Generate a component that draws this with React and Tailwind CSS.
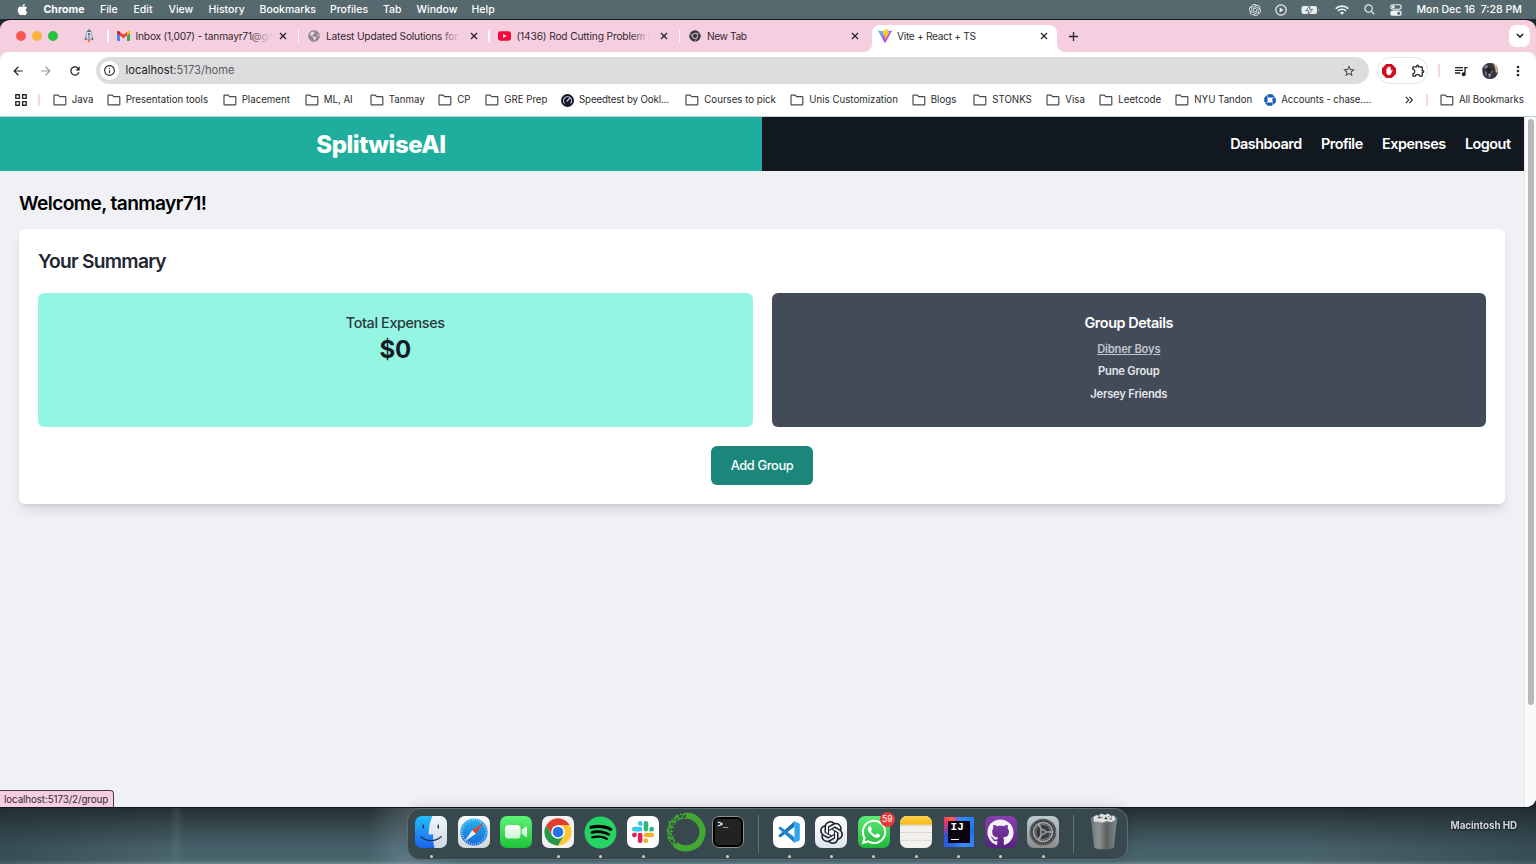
import React from "react";
import { FaApple, FaSpotify, FaWhatsapp, FaGithub, FaGlobeAmericas } from "react-icons/fa";
import { MdOutlineExtension, MdQueueMusic, MdStarBorder, MdMoreVert, MdRefresh, MdArrowBack, MdArrowForward, MdOutlineInfo } from "react-icons/md";
import { SiOpenai } from "react-icons/si";

/* ---------- small drawings ---------- */

const CloseIcon = () => (
  <svg viewBox="0 0 10 10" className="size-[8px] shrink-0" fill="none" stroke="#2b2329" strokeWidth="1.6">
    <path d="M1.2 1.2l7.6 7.6M8.8 1.2L1.2 8.8" />
  </svg>
);

const FolderIcon = () => (
  <svg viewBox="0 0 14 12" className="h-[12px] w-[14px] shrink-0" fill="none" stroke="#4a4a4d" strokeWidth="1.2" strokeLinejoin="round">
    <path d="M1 10.2V1.8a.6.6 0 0 1 .6-.6h3.6l1.4 1.5h5.6a.6.6 0 0 1 .6.6v6.9a.6.6 0 0 1-.6.6H1.6a.6.6 0 0 1-.6-.6z" />
  </svg>
);

const Rocket = () => (
  <svg viewBox="0 0 12 14" className="h-[14px] w-[12px]">
    <path d="M3.400 7L1.600 9.400v2.200l2.200-1.200zM8.600 7l1.800 2.400v2.200l-2.200-1.200z" fill="#4f7fb5" />
    <path d="M6 .4C3.600 2 3 4.600 3 6.600c0 1.700.4 3 1 4h4c.6-1 1-2.300 1-4C9 4.600 8.400 2 6 .4z" fill="#dfe5ea" stroke="#667786" strokeWidth=".6" />
    <path d="M6 .4C4.900 1.100 4.200 2 3.800 3h4.400C7.800 2 7.100 1.100 6 .4z" fill="#56708a" />
    <circle cx="6" cy="5.300" r="1.200" fill="#3b6a9a" />
    <path d="M6 6.900v3.600" stroke="#c2413a" strokeWidth="1" />
    <path d="M4.600 11h2.800L6 13.900z" fill="#e8742c" />
  </svg>
);

const Gmail = () => (
  <svg viewBox="0 0 24 18" className="h-[10px] w-[13px]">
    <path d="M0 3v13.400C0 17.300.7 18 1.600 18h3.900V8z" fill="#4285f4" />
    <path d="M18.500 18h3.900c.9 0 1.600-.7 1.600-1.600V3l-5.500 5z" fill="#34a853" />
    <path d="M18.500 1.400V8L24 4V2.400c0-2.300-2.600-3-4.100-2z" fill="#fbbc04" />
    <path d="M5.500 8V1.400L12 6.300l6.500-4.900V8L12 13z" fill="#ea4335" />
    <path d="M0 2.400V4l5.500 4V1.400L4.100.4C2.600-.6 0 .1 0 2.400z" fill="#c5221f" />
  </svg>
);

const Globe = () => <FaGlobeAmericas className="size-[12px] text-[#8b878b]" />;

const YouTube = () => (
  <svg viewBox="0 0 14 10" className="h-[10px] w-[13px]">
    <rect width="14" height="10" rx="2.600" fill="#f5083a" />
    <path d="M5.600 2.900v4.200L9.200 5z" fill="#fff" />
  </svg>
);

const ChromeGray = () => (
  <svg viewBox="0 0 24 24" className="size-[12px]">
    <circle cx="12" cy="12" r="11.500" fill="#3d3940" />
    <g stroke="#d9c6d1" strokeWidth="1.400" fill="none">
      <path d="M12 6.600h10.300M7.300 14.700L2.200 5.800M16.700 14.700l-5.100 8.800" />
      <circle cx="12" cy="12" r="5.300" fill="#3d3940" strokeWidth="1.800" />
    </g>
  </svg>
);

const Vite = () => (
  <svg viewBox="0 0 256 257" className="size-[14px] shrink-0">
    <defs>
      <linearGradient id="vite-a" x1="0" y1="0" x2=".6" y2=".8">
        <stop offset="0" stopColor="#41d1ff" />
        <stop offset="1" stopColor="#bd34fe" />
      </linearGradient>
      <linearGradient id="vite-b" x1=".4" y1="0" x2=".5" y2="1">
        <stop offset="0" stopColor="#ffea83" />
        <stop offset=".1" stopColor="#ffdd35" />
        <stop offset="1" stopColor="#ffa800" />
      </linearGradient>
    </defs>
    <path fill="url(#vite-a)" d="M255.153 37.938L134.897 252.976c-2.483 4.440-8.862 4.466-11.382.048L.875 37.958c-2.746-4.814 1.371-10.646 6.827-9.670l120.385 21.517a6.537 6.537 0 0 0 2.322-.004l117.867-21.483c5.438-.991 9.574 4.796 6.877 9.620Z" />
    <path fill="url(#vite-b)" d="M185.432.063L96.440 17.501a3.268 3.268 0 0 0-2.634 3.014l-5.474 92.456a3.268 3.268 0 0 0 3.997 3.378l24.777-5.718c2.318-.535 4.413 1.507 3.936 3.838l-7.361 36.047c-.495 2.426 1.782 4.500 4.151 3.780l15.304-4.649c2.372-.720 4.652 1.360 4.150 3.788l-11.698 56.621c-.732 3.542 3.979 5.473 5.943 2.437l1.313-2.028l72.516-144.720c1.215-2.423-.880-5.186-3.540-4.672l-25.505 4.922c-2.396.462-4.435-1.770-3.759-4.114l16.646-57.705c.677-2.350-1.370-4.583-3.769-4.113Z" />
  </svg>
);

const Speedtest = () => (
  <svg viewBox="0 0 14 14" className="size-[13px] shrink-0">
    <circle cx="7" cy="7" r="7" fill="#16182b" />
    <path d="M3.900 10.200a4.300 4.300 0 1 1 6.200 0" fill="none" stroke="#dfe2ea" strokeWidth="1.100" />
    <path d="M6.200 7.900l3-3.200" stroke="#dfe2ea" strokeWidth="1.300" />
  </svg>
);

const Chase = () => (
  <svg viewBox="0 0 24 24" className="size-[12px] shrink-0" fill="#155bb5">
    <path d="M8 .5h8.500L23 7H8z" />
    <path d="M23.500 8v8.500L17 23V8z" />
    <path d="M16 23.500H7.500L1 17h15z" />
    <path d="M.5 16V7.500L7 1v15z" />
  </svg>
);

const Battery = () => (
  <svg viewBox="0 0 19 10" className="h-[10px] w-[19px]">
    <rect x=".5" y="1" width="15.500" height="8" rx="2" fill="#e9edee" />
    <path d="M17.200 3.500v3c1.300-.4 1.300-2.600 0-3z" fill="#aebabc" />
    <path d="M9.300 0L4.800 5.600h3L7 10l4.600-5.700H8.500z" fill="#f4f6f6" stroke="#55696f" strokeWidth=".9" />
  </svg>
);

const Wifi = () => (
  <svg viewBox="0 0 14 10" className="h-[10px] w-[14px]" fill="none" stroke="#eef2f2" strokeWidth="1.700">
    <path d="M.7 3.600a9 9 0 0 1 12.600 0M2.900 5.900a5.900 5.900 0 0 1 8.200 0" />
    <path d="M7 9.800L4.900 7.700a3 3 0 0 1 4.200 0z" fill="#eef2f2" stroke="none" />
  </svg>
);

const MenuSearch = () => (
  <svg viewBox="0 0 12 12" className="size-[11px]" fill="none" stroke="#eef2f2" strokeWidth="1.300">
    <circle cx="5" cy="5" r="4" />
    <path d="M8 8l3.400 3.400" />
  </svg>
);

const ControlCenter = () => (
  <svg viewBox="0 0 12 12" className="size-[12px]">
    <rect x=".8" y=".8" width="10.400" height="4.400" rx="2.200" fill="none" stroke="#eef2f2" strokeWidth="1.100" />
    <circle cx="3.300" cy="3" r="1.400" fill="#eef2f2" />
    <rect x=".3" y="6.500" width="11.400" height="5.300" rx="2.600" fill="#eef2f2" />
    <circle cx="8.800" cy="9.150" r="1.500" fill="#55696f" />
  </svg>
);

const PlayRing = () => (
  <svg viewBox="0 0 12 12" className="size-[12px]">
    <circle cx="6" cy="6" r="5.200" fill="none" stroke="#eef2f2" strokeWidth="1.200" />
    <path d="M4.600 3.600v4.800L8.600 6z" fill="#eef2f2" />
  </svg>
);

const AdBlock = () => (
  <svg viewBox="0 0 24 24" className="size-[14px]">
    <path d="M7.200 0h9.600L24 7.200v9.600L16.800 24H7.200L0 16.800V7.200z" fill="#d20a1e" />
    <path d="M7.500 13V8.200c0-1.200 1.700-1.200 1.700 0V6c0-1.200 1.900-1.200 1.900 0V4.800c0-1.200 2-1.200 2 0v1.400c0-1.200 1.900-1.200 1.900 0v6l1.300-1.700c.8-1.100 2.200-.2 1.700.9l-2.700 5.700c-.7 1.500-1.700 2.100-3.200 2.100-2.900 0-4.600-1.900-4.600-4.800z" fill="#fff" />
  </svg>
);

const Avatar = () => (
  <svg viewBox="0 0 16 16" className="size-[16px]">
    <defs>
      <clipPath id="av"><circle cx="8" cy="8" r="8" /></clipPath>
    </defs>
    <g clipPath="url(#av)">
      <rect width="16" height="16" fill="#8d8f93" />
      <path d="M0 4l5-4h8l3 5v11H2z" fill="#34353d" />
      <path d="M11 0l5 1v8l-2 1-1-5z" fill="#cdb795" />
      <path d="M4 6l4-2 3 3-1 4-4 1z" fill="#23222b" />
      <path d="M2 3l3-1 1 2-3 2zM6 11l3-1v3l-2 2z" fill="#7d8ba0" />
      <path d="M3 8l2 1v3l-2 1z" fill="#556a86" />
      <path d="M9 7l2 1-1 3-1-1z" fill="#8a5848" />
    </g>
  </svg>
);

/* ---------- dock icons ---------- */

const Finder = () => (
  <svg viewBox="0 0 32 32" className="size-[32px]">
    <defs>
      <linearGradient id="fd-a" x1="0" y1="0" x2="0" y2="1"><stop offset="0" stopColor="#25bdfd" /><stop offset="1" stopColor="#1a63ee" /></linearGradient>
      <linearGradient id="fd-b" x1="0" y1="0" x2="0" y2="1"><stop offset="0" stopColor="#f3f5f8" /><stop offset="1" stopColor="#cfd8e6" /></linearGradient>
      <clipPath id="fd-c"><rect width="32" height="32" rx="7" /></clipPath>
    </defs>
    <g clipPath="url(#fd-c)">
      <rect width="32" height="32" fill="url(#fd-a)" />
      <path d="M17.500 0C15 5.500 13.800 11 13.500 18.500h4.600c-.1 5 .3 9 1.400 13.500H32V0z" fill="url(#fd-b)" />
    </g>
    <path d="M8.300 9.200v2.800M23.300 9.200v2.800" stroke="#1b3150" strokeWidth="1.400" strokeLinecap="round" />
    <path d="M6 20.800c5.500 5.200 14.500 5.200 20 0" stroke="#1b3150" strokeWidth="1.300" fill="none" strokeLinecap="round" />
  </svg>
);

const Safari = () => (
  <svg viewBox="0 0 32 32" className="size-[32px]">
    <defs>
      <linearGradient id="sf-a" x1="0" y1="0" x2="0" y2="1"><stop offset="0" stopColor="#fcfcfc" /><stop offset="1" stopColor="#d5d6d8" /></linearGradient>
      <linearGradient id="sf-b" x1="0" y1="0" x2="0" y2="1"><stop offset="0" stopColor="#24b4f0" /><stop offset="1" stopColor="#1a67d8" /></linearGradient>
    </defs>
    <rect width="32" height="32" rx="7" fill="url(#sf-a)" />
    <circle cx="16" cy="16" r="13.600" fill="url(#sf-b)" />
    <circle cx="16" cy="16" r="12" fill="none" stroke="#cfeaff" strokeWidth="1.600" strokeDasharray=".6 1.490" />
    <path d="M25.500 6.500L17.800 17.800 14.200 14.200z" fill="#e8402f" />
    <path d="M6.500 25.500l7.700-11.300 3.600 3.600z" fill="#eef1f4" />
  </svg>
);

const FaceTime = () => (
  <svg viewBox="0 0 32 32" className="size-[32px]">
    <defs>
      <linearGradient id="ft-a" x1="0" y1="0" x2="0" y2="1"><stop offset="0" stopColor="#5df277" /><stop offset="1" stopColor="#1fc338" /></linearGradient>
      <linearGradient id="ft-b" x1="0" y1="0" x2="0" y2="1"><stop offset="0" stopColor="#fff" /><stop offset="1" stopColor="#c9f2cf" /></linearGradient>
    </defs>
    <rect width="32" height="32" rx="7" fill="url(#ft-a)" />
    <rect x="5" y="9" width="15.500" height="13.500" rx="3.600" fill="url(#ft-b)" />
    <path d="M21.700 14l3.800-3.300c.7-.6 1.500-.3 1.500.6v9c0 .9-.8 1.200-1.500.6L21.700 17.600z" fill="url(#ft-b)" />
  </svg>
);

const ChromeApp = () => (
  <svg viewBox="0 0 32 32" className="size-[32px]">
    <rect width="32" height="32" rx="7" fill="#f3f2f0" />
    <g transform="translate(1.120 1.120) scale(.62)">
      <path d="M4.950 13A22 22 0 0 1 43.050 13L24 13 14.470 29.500z" fill="#e33b2e" />
      <path d="M4.950 13A22 22 0 0 1 43.050 13L24 13 14.470 29.500z" fill="#fcc934" transform="rotate(120 24 24)" />
      <path d="M4.950 13A22 22 0 0 1 43.050 13L24 13 14.470 29.500z" fill="#279847" transform="rotate(240 24 24)" />
      <circle cx="24" cy="24" r="11" fill="#fff" />
      <circle cx="24" cy="24" r="8.600" fill="#2472e8" />
    </g>
  </svg>
);

const SpotifyApp = () => (
  <div className="relative flex size-[33px] items-center justify-center">
    <span className="absolute size-[26px] rounded-full bg-black" />
    <FaSpotify className="relative size-[33px] text-[#26d365]" />
  </div>
);

const SLACK = "M5.042 15.165a2.528 2.528 0 0 1-2.520 2.523A2.528 2.528 0 0 1 0 15.165a2.527 2.527 0 0 1 2.522-2.520h2.520v2.520zM6.313 15.165a2.527 2.527 0 0 1 2.521-2.520 2.527 2.527 0 0 1 2.521 2.520v6.313A2.528 2.528 0 0 1 8.834 24a2.528 2.528 0 0 1-2.521-2.522v-6.313z";
const SlackApp = () => (
  <svg viewBox="0 0 32 32" className="size-[32px]">
    <rect width="32" height="32" rx="7" fill="#fff" />
    <g transform="translate(5 5) scale(.92)">
      <path d={SLACK} fill="#e01e5a" />
      <path d={SLACK} fill="#36c5f0" transform="rotate(90 12 12)" />
      <path d={SLACK} fill="#2eb67d" transform="rotate(180 12 12)" />
      <path d={SLACK} fill="#ecb22e" transform="rotate(270 12 12)" />
    </g>
  </svg>
);

const Anaconda = () => (
  <svg viewBox="0 0 40 40" className="size-[40px] shrink-0" fill="none">
    <path d="M20 3.600A16.400 16.400 0 1 1 9.500 32.600" stroke="#43a832" strokeWidth="6.200" />
    <path d="M20 1.800A18.200 18.200 0 0 0 9.500 34.900" stroke="#43a832" strokeWidth="1.400" strokeDasharray="2.600 1" />
    <path d="M20 6.400A13.600 13.600 0 0 0 9.500 30" stroke="#43a832" strokeWidth="1.200" strokeDasharray="2.200 1.200" />
    <path d="M19 1l-4 6-5-3-1 6-6 0 2 5-4 3 4 4-3 4 6 1 0 6 5-2M12 3l1 5M6 8l4 3M3 13l5 3M2 21l5-2M3 27l5-3" stroke="#43a832" strokeWidth="1.300" />
  </svg>
);

const TerminalApp = () => (
  <div className="flex size-[32px] items-start rounded-[7px] border border-[#8d9294] bg-black p-[2px]">
    <div className="size-full rounded-[4px] bg-[#222223] pl-[2.500px] pt-px font-['Liberation_Mono',monospace] text-[9px] font-bold leading-[10px] text-white">&gt;_</div>
  </div>
);

const VsCodeApp = () => (
  <svg viewBox="0 0 32 32" className="size-[32px]">
    <rect width="32" height="32" rx="7" fill="#fff" />
    <path d="M21.500 5.200L5.200 19.700l2 1.900 14.300-10.800z" fill="#1673ba" />
    <path d="M21.500 26.800L5.200 12.300l2-1.900 14.300 10.800z" fill="#1a86d2" />
    <path d="M21.500 5.200l5.300 2.500v16.600l-5.300 2.500c-.6.200-1 .1-1.400-.3.500.4 1.400 0 1.400-.8V6.300c0-.8-.9-1.200-1.400-.8.400-.4.800-.5 1.400-.3z" fill="#2ea5f2" />
  </svg>
);

const OpenAiApp = () => (
  <div className="flex size-[32px] items-center justify-center rounded-[7px] bg-gradient-to-b from-white to-[#dde6f2]">
    <SiOpenai className="size-[23px] text-[#1d1f22]" />
  </div>
);

const WhatsAppApp = () => (
  <div className="relative flex size-[32px] items-center justify-center rounded-[7px] bg-gradient-to-b from-[#5bea74] to-[#1fb83a]">
    <FaWhatsapp className="size-[28px] text-white" />
    <span className="absolute -right-[5px] -top-[4px] flex size-[15px] items-center justify-center rounded-full bg-[#e8383a] text-[8.500px] text-white">59</span>
  </div>
);

const NotesApp = () => (
  <svg viewBox="0 0 32 32" className="size-[32px]">
    <defs>
      <clipPath id="nt"><rect width="32" height="32" rx="7" /></clipPath>
      <linearGradient id="nt-y" x1="0" y1="0" x2="0" y2="1"><stop offset="0" stopColor="#fdd047" /><stop offset="1" stopColor="#f9b91a" /></linearGradient>
    </defs>
    <g clipPath="url(#nt)">
      <rect width="32" height="32" fill="#f3f1ee" />
      <rect width="32" height="8.600" fill="url(#nt-y)" />
      <path d="M0 9.200h32" stroke="#b9aa86" strokeWidth=".9" strokeDasharray="1 .8" />
      <path d="M0 16.500h32M0 24.300h32" stroke="#d3d1ce" strokeWidth=".8" />
    </g>
  </svg>
);

const IntelliJApp = () => (
  <div className="flex size-[30px] items-center justify-center bg-[conic-gradient(from_0deg,#2f8df5,#1f6ff0_25%,#3d8ef8_45%,#2a6df0_55%,#2557d8_70%,#f0306e_85%,#ff6a30_92%,#a94ae0_97%,#2f8df5)]">
    <div className="flex size-[22px] flex-col justify-between bg-[#0b0510] pb-[3px] pl-[3px] pt-px">
      <span className="font-['Liberation_Mono',monospace] text-[11px] font-bold leading-[11px] text-white">IJ</span>
      <span className="h-[1.500px] w-[8px] bg-white" />
    </div>
  </div>
);

const GitHubApp = () => (
  <div className="flex size-[32px] items-center justify-center rounded-[7px] bg-gradient-to-b from-[#8a3fb0] to-[#57237f]">
    <FaGithub className="size-[27px] text-[#f5f1f8]" />
  </div>
);

const SettingsApp = () => (
  <svg viewBox="0 0 32 32" className="size-[32px]">
    <defs>
      <linearGradient id="st" x1="0" y1="0" x2="0" y2="1"><stop offset="0" stopColor="#bccbd0" /><stop offset="1" stopColor="#8d8b8c" /></linearGradient>
    </defs>
    <rect width="32" height="32" rx="7" fill="url(#st)" />
    <circle cx="16" cy="16" r="13.300" fill="#3c3f41" />
    <circle cx="16" cy="16" r="12.300" fill="none" stroke="#777c7e" strokeWidth="1.400" strokeDasharray="1 .9" />
    <circle cx="16" cy="16" r="9.600" fill="#515456" stroke="#a4a8aa" strokeWidth="1.500" />
    <circle cx="16" cy="16" r="7.500" fill="#3a3d3f" stroke="#888c8e" strokeWidth=".8" />
    <path d="M16 16h9M16 16l-4.500-7.800M16 16l-4.500 7.800" stroke="#a4a8aa" strokeWidth="1.700" />
    <circle cx="16" cy="16" r="2.400" fill="#46494b" stroke="#a4a8aa" strokeWidth="1.100" />
  </svg>
);

const Trash = () => (
  <svg viewBox="0 0 30 38" className="h-[38px] w-[30px] shrink-0">
    <defs>
      <linearGradient id="tr" x1="0" y1="0" x2="1" y2="0"><stop offset="0" stopColor="#6d7375" /><stop offset=".3" stopColor="#8f9496" /><stop offset=".6" stopColor="#5b6163" /><stop offset="1" stopColor="#83898b" /></linearGradient>
    </defs>
    <path d="M2 6l3.200 28.500c.3 2.400 19.300 2.400 19.600 0L28 6z" fill="url(#tr)" />
    <ellipse cx="15" cy="5.800" rx="13" ry="3.200" fill="#4c5456" stroke="#9ea5a6" strokeWidth=".8" />
    <path d="M4 5l3-3 3 1 2-2.500 4 1.500 3-1.500 3 2.500 3-.5 1.500 4-4 2.500-5-1-4 1.500-5-1-3 .5z" fill="#dfe3e2" />
    <path d="M8 5l3-2 1 2.500zM15 6l2-2.500 2 3zM20.500 6.500l1.500-2 1 2z" fill="#485052" />
    <path d="M18.500 3l2 .5-.5 1.500z" fill="#3da06a" />
    <path d="M12.500 3.500l1.500 1-1.500 1zM22 3l1.500.5-1 1.200z" fill="#b2553f" />
  </svg>
);

/* ---------- data ---------- */

const MENU = [
  ["File", "w-[33.500px]"],
  ["Edit", "w-[35px]"],
  ["View", "w-[40px]"],
  ["History", "w-[51px]"],
  ["Bookmarks", "w-[70.500px]"],
  ["Profiles", "w-[53px]"],
  ["Tab", "w-[33.500px]"],
  ["Window", "w-[55px]"],
  ["Help", "w-[40px]"],
];

const TABS = [
  [Gmail, "Inbox (1,007) - tanmayr71@gr", "w-[190.500px]", "tracking-[-0.020em]", true],
  [Globe, "Latest Updated Solutions for", "w-[190.500px]", "tracking-[-0.018em]", true],
  [YouTube, "(1436) Rod Cutting Problem |", "w-[190.500px]", "tracking-[-0.014em]", true],
  [ChromeGray, "New Tab", "w-[193px]", "tracking-[-0.040em]", false],
];

const BOOKMARKS = [
  ["Java", "w-[54px]"],
  ["Presentation tools", "w-[116px]"],
  ["Placement", "w-[82px]"],
  ["ML, AI", "w-[65px]"],
  ["Tanmay", "w-[68.500px]"],
  ["CP", "w-[47px]"],
  ["GRE Prep", "w-[75.800px]"],
  ["Speedtest by Ookl...", "w-[124.300px] tracking-[-0.013em]", Speedtest],
  ["Courses to pick", "w-[105px]"],
  ["Unis Customization", "w-[121.500px]"],
  ["Blogs", "w-[61.500px]"],
  ["STONKS", "w-[73px]"],
  ["Visa", "w-[53px]"],
  ["Leetcode", "w-[76px]"],
  ["NYU Tandon", "w-[89px]"],
  ["Accounts - chase....", "w-[140.300px] tracking-[-0.010em]", Chase],
];

const DOCK_LEFT = [
  [Finder, true], [Safari, false], [FaceTime, false], [ChromeApp, true],
  [SpotifyApp, true], [SlackApp, true], [Anaconda, false], [TerminalApp, true],
];
const DOCK_RIGHT = [
  [VsCodeApp, true], [OpenAiApp, true], [WhatsAppApp, true], [NotesApp, true],
  [IntelliJApp, true], [GitHubApp, true], [SettingsApp, true],
];

/* ---------- sections ---------- */

function MenuBar() {
  return (
    <div className="flex h-[19px] items-center justify-between pl-[15.500px] pr-[15px] text-[10.500px] font-medium leading-none text-white">
      <div className="flex items-center pt-px">
        <span className="w-[28px]"><FaApple className="size-[13px] -translate-y-px" /></span>
        <span className="w-[56.500px] text-[10.600px] font-bold">Chrome</span>
        {MENU.map(([label, w]) => (
          <span key={label} className={`${w} whitespace-nowrap`}>{label}</span>
        ))}
      </div>
      <div className="flex items-center">
        <span className="w-[26px]"><SiOpenai className="size-[12px] text-[#eef2f2]" /></span>
        <span className="w-[26px]"><PlayRing /></span>
        <span className="w-[34.500px]"><Battery /></span>
        <span className="w-[29px]"><Wifi /></span>
        <span className="w-[26px]"><MenuSearch /></span>
        <span className="w-[26.500px]"><ControlCenter /></span>
        <span className="w-[104.500px] whitespace-pre pt-px text-[10.500px]">Mon Dec 16  7:28 PM</span>
      </div>
    </div>
  );
}

function TabStrip() {
  return (
    <div className="flex h-[32px] items-center bg-[#f5cfe0]">
      <div className="flex w-[107px] shrink-0 items-center gap-[6px] pl-[16.400px]">
        <span className="size-[10px] rounded-full bg-[#fd5753]" />
        <span className="size-[10px] rounded-full bg-[#fdb23c]" />
        <span className="size-[10px] rounded-full bg-[#29c041]" />
        <span className="ml-[19px]"><Rocket /></span>
      </div>
      {TABS.map(([Icon, title, w, tracking, fade]) => (
        <div key={title} className={`${w} flex shrink-0 items-center`}>
          <span className="h-[12px] w-[1.500px] shrink-0 bg-white/90" />
          <span className="flex w-[27px] shrink-0 justify-center pl-[3px] pr-px"><Icon /></span>
          <span className={`${tracking} relative w-[138px] whitespace-nowrap text-[10.200px] leading-[16px] text-[#33292f]`}>
            {title}
            {fade && <span className="absolute inset-y-0 right-[3px] w-[22px] bg-gradient-to-r from-transparent to-[#f5cfe0]" />}
          </span>
          <span className="ml-[5.500px]"><CloseIcon /></span>
        </div>
      ))}
      <div className="relative flex h-[27px] w-[185px] shrink-0 items-center self-end rounded-t-[8px] bg-white pb-[5px] pl-[6px]">
        <svg viewBox="0 0 8 8" className="absolute -left-[8px] bottom-0 size-[8px]" fill="#fff"><path d="M8 0v8H0a8 8 0 0 0 8-8z" /></svg>
        <svg viewBox="0 0 8 8" className="absolute -right-[8px] bottom-0 size-[8px]" fill="#fff"><path d="M0 0v8h8a8 8 0 0 1-8-8z" /></svg>
        <Vite />
        <span className="ml-[5.500px] w-[143px] text-[10.200px] leading-[16px] tracking-[-0.030em] text-[#2b2b2d]">Vite + React + TS</span>
        <CloseIcon />
      </div>
      <svg viewBox="0 0 10 10" className="ml-[12px] size-[9px]" stroke="#2b2329" strokeWidth="1.500"><path d="M5 0v10M0 5h10" /></svg>
      <span className="ml-auto mr-[6px] flex h-[22px] w-[21px] items-center justify-center rounded-[7px] bg-white">
        <svg viewBox="0 0 8 6" className="h-[6px] w-[8px]" fill="none" stroke="#222" strokeWidth="1.600"><path d="M1 1l3 3 3-3" /></svg>
      </span>
    </div>
  );
}

function Toolbar() {
  return (
    <div className="bg-[#f5cfe0]">
      <div className="flex h-[37px] items-center rounded-t-[8px] bg-white text-[#222]">
        <div className="flex w-[96px] shrink-0 items-center gap-[14.700px] pl-[10.500px]">
          <MdArrowBack className="size-[14px]" />
          <MdArrowForward className="size-[14px] text-[#9a9a9c]" />
          <MdRefresh className="size-[14px]" />
        </div>
        <div className="flex h-[27px] w-[1273px] shrink-0 items-center rounded-full bg-[#dddddf] pl-[4px] pr-[13.500px]">
          <span className="flex size-[19px] items-center justify-center rounded-full bg-white"><MdOutlineInfo className="size-[13px] text-[#333]" /></span>
          <span className="ml-[6.500px] pt-px text-[11.200px] leading-none text-[#5b5c60]"><span className="text-[#1d1d1f]">localhost</span>:5173/home</span>
          <MdStarBorder className="ml-auto size-[14px] text-[#444]" />
        </div>
        <div className="ml-[7.500px] flex h-[27px] w-[51px] shrink-0 items-center justify-between rounded-full border border-[#e4e4e6] pl-[4px] pr-px">
          <AdBlock />
          <MdOutlineExtension className="size-[15px]" />
        </div>
        <span className="ml-[10.500px] h-[13px] w-[2px] shrink-0 bg-[#f7d6e4]" />
        <MdQueueMusic className="ml-[12.500px] size-[16px] shrink-0" />
        <span className="ml-[13px]"><Avatar /></span>
        <MdMoreVert className="ml-[12.500px] size-[16px] shrink-0" />
      </div>
    </div>
  );
}

function Bookmarks() {
  return (
    <div className="flex h-[27px] items-center bg-white pb-[5px] text-[9.700px] leading-none text-[#2a2a2c]">
      <div className="flex w-[52.700px] shrink-0 items-center pl-[15px]">
        <svg viewBox="0 0 12 12" className="size-[12px] shrink-0" fill="none" stroke="#2a2a2c" strokeWidth="1.400">
          <path d="M.8.8h3.600v3.600H.8zM7.600.8h3.600v3.600H7.600zM.8 7.600h3.600v3.600H.8zM7.600 7.600h3.600v3.600H7.600z" />
        </svg>
        <span className="ml-[11px] h-[12px] w-[2px] shrink-0 bg-[#f7d6e4]" />
      </div>
      {BOOKMARKS.map(([label, w, Icon]) => (
        <div key={label} className={`${w} flex shrink-0 items-center gap-[5px] whitespace-nowrap`}>
          {Icon ? <Icon /> : <FolderIcon />}
          <span>{label}</span>
        </div>
      ))}
      <svg viewBox="0 0 8 8" className="size-[8px] shrink-0" fill="none" stroke="#333" strokeWidth="1.200"><path d="M.8.8L3.800 4l-3 3.200M4.400.8L7.400 4l-3 3.200" /></svg>
      <span className="ml-[13.500px] h-[12px] w-[2px] shrink-0 bg-[#f7d6e4]" />
      <div className="ml-[11.800px] flex items-center gap-[5px] whitespace-nowrap tracking-[-0.005em]"><FolderIcon /><span>All Bookmarks</span></div>
    </div>
  );
}

function Page() {
  return (
    <div className="flex h-[691px] border-t border-[#bcd3cf] bg-[#f0f1f5]">
      <main className="min-w-0 flex-1">
        <header className="grid h-[54px] grid-cols-2">
          <div className="flex items-center justify-center bg-[#1fae9d] pt-[2px]">
            <h1 className="text-[24px] font-extrabold leading-none tracking-[-0.020em] text-white">SplitwiseAI</h1>
          </div>
          <nav className="flex items-center justify-end gap-[19.300px] bg-[#111820] pr-[13.500px] text-[14.400px] font-semibold leading-none tracking-[-0.034em] text-white">
            <a>Dashboard</a>
            <a>Profile</a>
            <a>Expenses</a>
            <a>Logout</a>
          </nav>
        </header>
        <div className="px-[19px] pt-[19px]">
          <h2 className="text-[19.200px] font-semibold leading-[26px] tracking-[-0.032em] text-black">Welcome, tanmayr71!</h2>
          <section className="mt-[13px] flex h-[275px] flex-col items-center rounded-[6px] bg-white px-[19px] pt-[19px] shadow-[0_8px_12px_-2px_rgba(0,0,0,0.110),0_3px_5px_-3px_rgba(0,0,0,0.100)]">
            <h3 className="self-start text-[19.200px] font-semibold leading-[26px] tracking-[-0.038em] text-[#1f2733]">Your Summary</h3>
            <div className="mt-[19px] grid h-[134px] w-full grid-cols-2 gap-[19px] text-center">
              <div className="rounded-[6px] bg-[#93f5e2] pt-[20px]">
                <p className="text-[14.400px] font-medium leading-[20px] tracking-[-0.027em] text-[#2a3a41]">Total Expenses</p>
                <p className="mt-[2px] text-[24px] font-bold leading-[30px] tracking-[-0.010em] text-[#131c26]">$0</p>
              </div>
              <div className="rounded-[6px] bg-[#424b57] pt-[20px]">
                <p className="text-[14.400px] font-semibold leading-[20px] tracking-[-0.030em] text-white">Group Details</p>
                <ul className="mt-[5px] text-[11.200px] font-semibold leading-[22.400px] tracking-[-0.018em] text-[#e4e6ea]">
                  <li className="text-[#c0c5ce] underline">Dibner Boys</li>
                  <li>Pune Group</li>
                  <li>Jersey Friends</li>
                </ul>
              </div>
            </div>
            <button className="mt-[19px] h-[39px] w-[102px] rounded-[6px] bg-[#1a877a] text-[12.800px] font-medium tracking-[-0.027em] text-white">Add Group</button>
          </section>
        </div>
      </main>
      <div className="flex w-[12px] justify-center border-l border-[#e6e6e8] bg-[#fafafa] pt-[2px]">
        <div className="h-[586px] w-[6px] rounded-full bg-[#b9b9ba]" />
      </div>
    </div>
  );
}

function DockItem({ Icon, open }) {
  return (
    <div className="flex w-[42.400px] shrink-0 flex-col items-center">
      <div className="flex h-[46px] w-full items-center justify-center"><Icon /></div>
      {open && <span className="size-[3px] rounded-full bg-[#c3ced1]" />}
    </div>
  );
}

function DockDivider() {
  return (
    <div className="flex w-[18.700px] shrink-0 justify-center pt-[6px]">
      <span className="h-[38px] w-px bg-[#5f7478]" />
    </div>
  );
}

function Dock() {
  return (
    <div className="relative mr-px flex h-[52px] w-[721px] rounded-[13px] border border-[#5a6f74] bg-[#37494e] pl-[2px] shadow-[0_0_14px_rgba(0,0,0,0.150)]">
      {DOCK_LEFT.map(([Icon, open], i) => <DockItem key={i} Icon={Icon} open={open} />)}
      <DockDivider />
      {DOCK_RIGHT.map(([Icon, open], i) => <DockItem key={i} Icon={Icon} open={open} />)}
      <DockDivider />
      <DockItem Icon={Trash} open={false} />
    </div>
  );
}

export default function App() {
  return (
    <div className="flex h-[864px] w-[1536px] flex-col overflow-hidden bg-[#56696f] font-['Inter','Liberation_Sans',sans-serif] antialiased">
      <MenuBar />
      <div className="relative bg-[#1c2a2e]">
        <div className="overflow-hidden rounded-[10px] rounded-bl-none border-y border-[#16141b]">
          <TabStrip />
          <Toolbar />
          <Bookmarks />
          <Page />
        </div>
        <div className="absolute bottom-px left-0 flex h-[17px] w-[114px] items-center rounded-tr-[4px] border-r border-t border-[#4a3c44] bg-[#f5cfe0] pl-[4px] pt-px text-[9.800px] leading-none tracking-[-0.010em] text-[#33292f]">localhost:5173/2/group</div>
      </div>
      <div className="relative flex flex-1 justify-center bg-[linear-gradient(90deg,rgba(30,45,52,0.400)_0%,transparent_11%,rgba(130,155,160,0.150)_11.500%,transparent_12%,transparent_24%,rgba(150,175,190,0.350)_27%,transparent_30%,transparent_85%,rgba(30,45,52,0.400)_100%),linear-gradient(180deg,#242f32_0%,#35464a_30%,#46606a_70%,#4a656b_93%,#6c8591_100%)]">
        <Dock />
        <span className="absolute right-[19px] top-[11.500px] text-[9.800px] font-bold leading-[12px] tracking-[-0.006em] text-[#cfd5d7] drop-shadow-[0_1px_1px_rgba(0,0,0,0.600)]">Macintosh HD</span>
      </div>
    </div>
  );
}
